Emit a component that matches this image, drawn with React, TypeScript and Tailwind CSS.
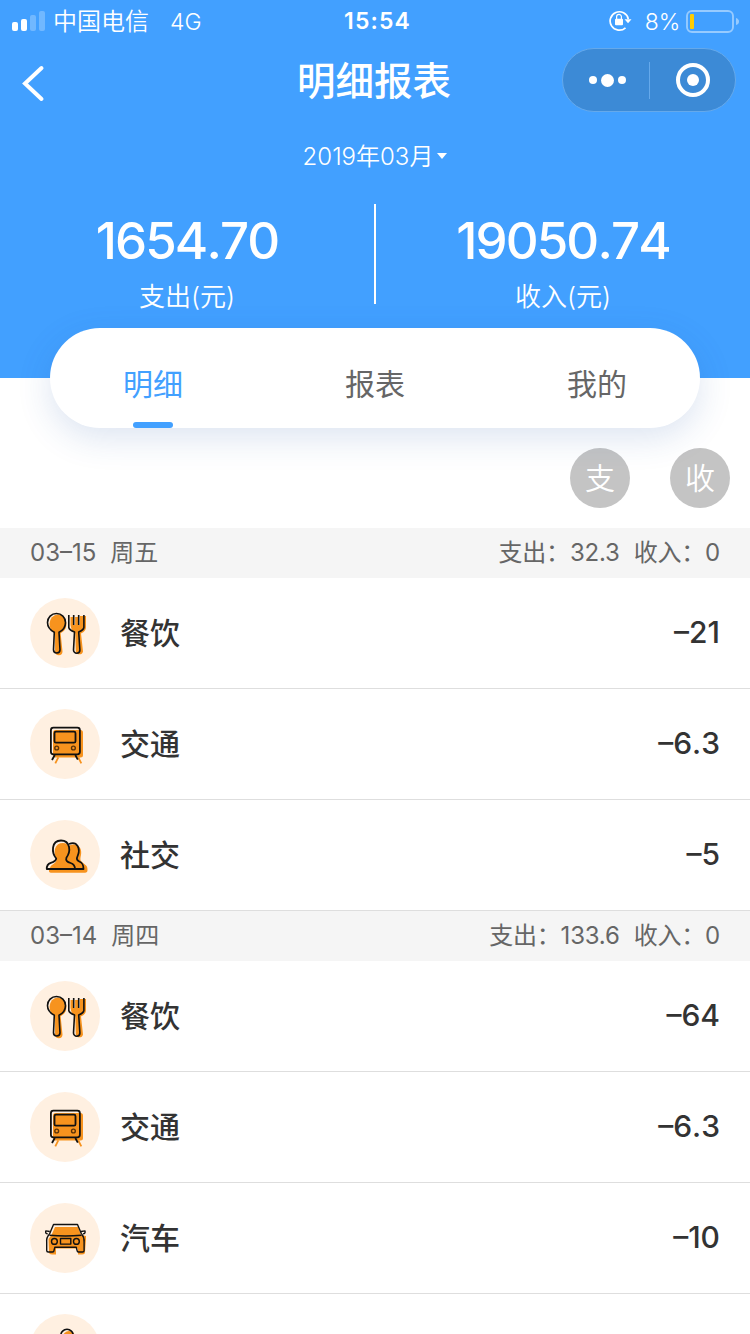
import React from 'react';

type IconName = 'food' | 'train' | 'social' | 'car' | 'person';

interface Item {
    icon: IconName;
    name?: string;
    amount?: string;
}

interface Day {
    date: string;
    week: string;
    out: string;
    income: string;
    items: Item[];
}

const days: Day[] = [
    {
        date: '03–15',
        week: '周五',
        out: '32.3',
        income: '0',
        items: [
            { icon: 'food', name: '餐饮', amount: '–21' },
            { icon: 'train', name: '交通', amount: '–6.3' },
            { icon: 'social', name: '社交', amount: '–5' },
        ],
    },
    {
        date: '03–14',
        week: '周四',
        out: '133.6',
        income: '0',
        items: [
            { icon: 'food', name: '餐饮', amount: '–64' },
            { icon: 'train', name: '交通', amount: '–6.3' },
            { icon: 'car', name: '汽车', amount: '–10' },
            { icon: 'person' },
        ],
    },
];

const ORANGE = '#f7931e';

// each icon is an orange fill shifted down-right under a black outline
const icons: Record<IconName, React.ReactNode> = {
    food: (
        <>
            <g fill={ORANGE} stroke="none">
                <ellipse cx="28" cy="26" rx="8.5" ry="9.5" />
                <path d="M25 34h5.500l2 19.500a3.700 3.700 0 0 1-7.400 0z" />
                <path d="M40.500 27V19h3v8h1.600v-8h3.300v8h1.600v-9H56v11q0 4-5 6.500l2 18a3.700 3.700 0 0 1-7.200 0l-.5-18q-4-2.500-4.800-8.500z" />
            </g>
            <path d="M24.300 34.300C20 32 17.500 28.500 17.500 24.500c0-5 4-9 9-9s9 4 9 9c0 4-2.500 7.800-6.500 9.800l1 17.500a3.200 3.200 0 0 1-6.500 0z" />
            <path d="M38.800 17v12.500q.5 2.500 5.700 4.500l-1 18a3.200 3.200 0 0 0 6.400 0l-1.200-18q4.800-2 5.200-4.500V17M43.700 17v10M48.700 17v10" />
        </>
    ),
    train: (
        <>
            <rect x="23" y="21" width="30" height="27.500" rx="2.500" fill={ORANGE} stroke="none" />
            <g strokeWidth="1.800">
                <path d="M28.300 48.300l-3 6M48.300 48.300l3 6" stroke={ORANGE} />
                <rect x="20.900" y="18.700" width="29" height="26.600" rx="2.500" />
                <rect x="24.500" y="22.700" width="21" height="11" rx="1.500" />
                <path d="M24.800 46l-2.800 5M45.300 46l2.500 4.700" />
            </g>
            <g stroke="#5a3208" strokeWidth="1.400">
                <circle cx="26.700" cy="39" r="1.900" />
                <circle cx="43.400" cy="39" r="1.900" />
            </g>
        </>
    ),
    social: (
        <>
            <path
                d="M26 38c-3-7-1-15 7-15 3 0 4 1 5.500 3 9-4.500 14 2 12.500 9-.8 4-1 5 1 7l3.500 3q2 1 2 5 0 2.700-2.500 2.700H21q-2.500 0-2-3l2-4 4-3q2-2 1-4.700z"
                fill={ORANGE}
                stroke="none"
            />
            <g strokeWidth="1.800">
                <path d="M26.200 38.500C21.500 33 21 20.600 31 20.500c9.500 0 10 11 5.400 17.200-1 3 1 4.300 4.200 5.300 3.400 1.200 4.400 3 4.400 6H16.800c-.2-3.500 1-5.200 4-6.200 3.300-1 5.400-1.700 5.400-4.300z" />
                <path d="M39 24c8.500-3.500 11.500 5 8.800 11.500-1.300 3-1.500 4.300 1.500 6 3.200 1.500 4.200 3 4.200 7.500H45" />
            </g>
        </>
    ),
    car: (
        <>
            <path
                d="M25 24h23l3 8 5 1v3l-1 13q0 2.500-3 2.500h-4v-6H26v6h-4q-3 0-3-2.500l-.5-13 3-4z"
                fill={ORANGE}
                stroke="none"
            />
            <g strokeWidth="1.400">
                <path d="M19.500 31l4-9.500h24l4 9.500" />
                <path d="M19.800 28.500l-4-.6q-.8 3 2 3M51 28.500l4-.6q.6 3-2 3" />
                <path d="M19.500 31Q16.200 34.500 16.700 39v8.500q0 1.500 1.500 1.500h4.300q1.500 0 1.500-1.500l.8-3.200h21.500l.8 3.200q0 1.500 1.500 1.500h4q1.500 0 1.500-1.500V39q.5-4.500-2.500-8" />
                <path d="M19.500 32.300q16 1.500 32 0" />
                <rect x="30.500" y="35.500" width="10.300" height="5.600" />
                <circle cx="24.400" cy="38.400" r="2.900" />
                <circle cx="46.400" cy="38.400" r="2.900" />
            </g>
        </>
    ),
    person: (
        <>
            <circle cx="39" cy="23" r="6" fill={ORANGE} stroke="none" />
            <circle cx="37" cy="21.500" r="6.200" />
        </>
    ),
};

const StatusBar = () => (
    <div className="grid h-10 grid-cols-[1fr_auto_1fr] items-center pl-3 pr-[11px] text-[23px] leading-10">
        <div className="flex items-center">
            <svg width="33" height="20" viewBox="0 0 33 20" fill="white">
                <rect x="0" y="11" width="6" height="9" rx="2" />
                <rect x="9" y="8" width="6" height="12" rx="2" />
                <rect x="18" y="4" width="6" height="16" rx="2" opacity=".25" />
                <rect x="27" y="0" width="6" height="20" rx="2" opacity=".25" />
            </svg>
            <span className="ml-2 pt-0.5 text-2xl leading-10 font-[350]">中国电信</span>
            <span className="ml-[21px] pt-px font-[350]">4G</span>
        </div>
        <span className="pl-1 text-[23px] leading-10 font-semibold tracking-[1.1px]">15:54</span>
        <div className="flex items-center justify-end">
            <svg width="23" height="22" viewBox="0 0 23 22" fill="none" stroke="white" strokeWidth="1.700">
                <path d="M19.300 9A9.200 9.200 0 1 0 16.500 17.800" />
                <path d="M15.500 9.200h7l-3.500 4z" fill="white" stroke="none" />
                <rect x="6" y="8.700" width="8" height="6.600" rx="1" fill="white" stroke="none" />
                <path d="M7.600 9V6.800a2.400 2.400 0 0 1 4.800 0V9" strokeWidth="1.200" />
            </svg>
            <span className="ml-[13px] pt-px font-[350] tracking-[-0.2px]">8%</span>
            <svg className="ml-1.5" width="53" height="23" viewBox="0 0 53 23">
                <rect x="1" y="1" width="46" height="21" rx="5" fill="none" stroke="white" strokeOpacity=".45" strokeWidth="1.900" />
                <rect x="4" y="4" width="4" height="15" rx="1" fill="#ffcc00" />
                <path d="M50 8q3 1 3 3.500T50 15z" fill="white" opacity=".45" />
            </svg>
        </div>
    </div>
);

const NavBar = () => (
    <div className="grid h-[88px] grid-cols-[1fr_auto_1fr] items-start px-[14px]">
        <svg className="mt-6 ml-2" width="23" height="38" viewBox="0 0 23 38" fill="none" stroke="white" strokeWidth="4" strokeLinecap="round">
            <path d="M19.500 4L3 19.500L19.500 35" />
        </svg>
        <h1 className="pt-px pr-0.5 text-[38.500px] leading-20 font-medium">明细报表</h1>
        <div className="mt-2 flex h-16 w-[174px] items-center justify-self-end rounded-full border border-[#65a9eb] bg-[#3c8ad6]">
            <div className="flex w-[86px] shrink-0 items-center justify-center gap-1 pl-0.5">
                <i className="size-2 rounded-full bg-white" />
                <i className="size-[13px] rounded-full bg-white" />
                <i className="size-2 rounded-full bg-white" />
            </div>
            <div className="h-[37px] w-px bg-[#65a9eb]" />
            <div className="flex flex-1 justify-center">
                <div className="flex size-[34px] items-center justify-center rounded-full border-4 border-white">
                    <i className="size-3 rounded-full bg-white" />
                </div>
            </div>
        </div>
    </div>
);

const Total = ({ value, label }: { value: string; label: string }) => (
    <div className="flex-1 text-center">
        <div className="text-[51px] leading-[73px] font-medium tracking-[-1.900px] [font-kerning:none]">{value}</div>
        <div className="pt-px text-[26px] leading-[38px] font-[350]">{label}</div>
    </div>
);

const Tab = ({ label, active }: { label: string; active?: boolean }) => (
    <div className={`flex w-[60px] flex-col items-center text-[30px] ${active ? 'text-[#42a0ff]' : 'text-[#666]'}`}>
        <span className="h-[94px] leading-[112px]">{label}</span>
        {active && <span className="h-1.5 w-10 rounded-[3px] bg-[#42a0ff]" />}
    </div>
);

const Row = ({ icon, name, amount }: Item) => (
    <div className="flex h-[111px] items-center border-b border-[#dedede] px-[30px] text-[30px] font-medium text-[#333]">
        <div className="size-[70px] rounded-full bg-[#fff0e1]">
            <svg width="70" height="70" viewBox="0 0 70 70" fill="none">
                <g stroke="#111" strokeWidth="1.600" strokeLinejoin="round">{icons[icon]}</g>
            </svg>
        </div>
        <span className="ml-5 flex-1">{name}</span>
        <span className="pb-px [font-kerning:none]">{amount}</span>
    </div>
);

export default function App() {
    return (
        <div className="h-[1334px] w-[750px] overflow-hidden bg-white font-[Inter,'Noto_Sans_CJK_SC',sans-serif]">
            <header className="h-[378px] bg-[#42a0ff] text-white">
                <StatusBar />
                <NavBar />
                <div className="flex h-[76px] items-start justify-center pt-[9px] text-2xl leading-[40px] font-[350]">
                    2019年03月
                    <span className="mt-4 ml-1 border-x-[5px] border-t-6 border-x-transparent border-t-white" />
                </div>
                <div className="flex">
                    <Total value="1654.70" label="支出(元)" />
                    <div className="h-[100px] w-0.5 bg-white" />
                    <Total value="19050.74" label="收入(元)" />
                </div>
            </header>

            {/* Tabs */}
            <nav className="relative mx-[50px] -mt-[50px] flex h-[100px] justify-between rounded-full bg-white px-[73px] shadow-[0_10px_34px_rgba(40,90,170,0.16)]">
                <Tab label="明细" active />
                <Tab label="报表" />
                <Tab label="我的" />
            </nav>

            {/* Filters */}
            <div className="flex h-[100px] items-center justify-end gap-10 pr-5 text-[30px] font-[350] text-white">
                <div className="flex size-[60px] items-center justify-center rounded-full bg-[#c4c4c4]">支</div>
                <div className="flex size-[60px] items-center justify-center rounded-full bg-[#c4c4c4]">收</div>
            </div>

            {days.map((day) => (
                <section key={day.date}>
                    <div className="flex h-[50px] items-center justify-between bg-[#f5f5f5] px-[30px] text-2xl text-[#666]">
                        <div className="flex gap-3.5">
                            <span>{day.date}</span>
                            <span>{day.week}</span>
                        </div>
                        <div className="flex gap-3.5 tracking-[-0.2px]">
                            <span>支出：{day.out}</span>
                            <span>收入：{day.income}</span>
                        </div>
                    </div>
                    {day.items.map((item) => (
                        <Row key={item.icon} {...item} />
                    ))}
                </section>
            ))}
        </div>
    );
}
